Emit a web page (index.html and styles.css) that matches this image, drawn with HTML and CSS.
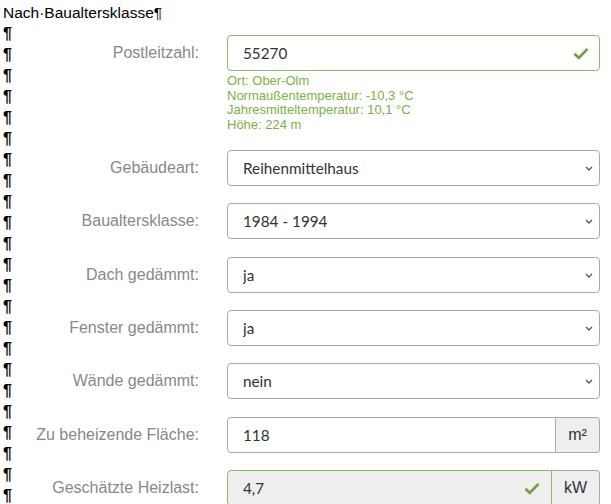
FILE: index.html
```html
<!DOCTYPE html>
<html lang="de">
<head>
<meta charset="utf-8">
<title>Nach Baualtersklasse</title>
<link rel="stylesheet" href="styles.css">
</head>
<body>
<div class="doc">
  <p class="title">Nach·Baualtersklasse¶</p>
  <div class="main">
    <div class="marks">¶<br>¶<br>¶<br>¶<br>¶<br>¶<br>¶<br>¶<br>¶<br>¶<br>¶<br>¶<br>¶<br>¶<br>¶<br>¶<br>¶<br>¶<br>¶<br>¶<br>¶<br>¶<br>¶</div>
    <form class="form">
      <div class="row">
        <label class="label" for="plz">Postleitzahl:</label>
        <div class="field valid">
          <input id="plz" class="control" value="55270">
          <svg class="check" width="16" height="13" viewBox="0 0 16 13"><path d="M1.5 6.8 L5.8 11 L14.5 1.8" fill="none" stroke="#6f9f3c" stroke-width="2.6"/></svg>
        </div>
        <div class="help">Ort: Ober-Olm<br>Normaußentemperatur: -10,3 °C<br>Jahresmitteltemperatur: 10,1 °C<br>Höhe: 224 m</div>
      </div>
      <div class="row">
        <label class="label" for="art">Gebäudeart:</label>
        <div class="field">
          <select id="art" class="control select"><option>Reihenmittelhaus</option></select>
          <svg class="chev" width="8" height="5" viewBox="0 0 8 5"><path d="M1 1 L4 4 L7 1" fill="none" stroke="#555" stroke-width="1.3"/></svg>
        </div>
      </div>
      <div class="row">
        <label class="label" for="bak">Baualtersklasse:</label>
        <div class="field">
          <select id="bak" class="control select"><option>1984 - 1994</option></select>
          <svg class="chev" width="8" height="5" viewBox="0 0 8 5"><path d="M1 1 L4 4 L7 1" fill="none" stroke="#555" stroke-width="1.3"/></svg>
        </div>
      </div>
      <div class="row">
        <label class="label" for="dach">Dach gedämmt:</label>
        <div class="field">
          <select id="dach" class="control select"><option>ja</option></select>
          <svg class="chev" width="8" height="5" viewBox="0 0 8 5"><path d="M1 1 L4 4 L7 1" fill="none" stroke="#555" stroke-width="1.3"/></svg>
        </div>
      </div>
      <div class="row">
        <label class="label" for="fen">Fenster gedämmt:</label>
        <div class="field">
          <select id="fen" class="control select"><option>ja</option></select>
          <svg class="chev" width="8" height="5" viewBox="0 0 8 5"><path d="M1 1 L4 4 L7 1" fill="none" stroke="#555" stroke-width="1.3"/></svg>
        </div>
      </div>
      <div class="row">
        <label class="label" for="wand">Wände gedämmt:</label>
        <div class="field">
          <select id="wand" class="control select"><option>nein</option></select>
          <svg class="chev" width="8" height="5" viewBox="0 0 8 5"><path d="M1 1 L4 4 L7 1" fill="none" stroke="#555" stroke-width="1.3"/></svg>
        </div>
      </div>
      <div class="row">
        <label class="label" for="fl">Zu beheizende Fläche:</label>
        <div class="group">
          <input id="fl" class="control gctl" value="118">
          <span class="addon addon-m2">m²</span>
        </div>
      </div>
      <div class="row">
        <label class="label" for="hl">Geschätzte Heizlast:</label>
        <div class="group">
          <div class="field gfield valid">
            <input id="hl" class="control gctl readonly" value="4,7" readonly>
            <svg class="check check-hl" width="16" height="13" viewBox="0 0 16 13"><path d="M1.5 6.8 L5.8 11 L14.5 1.8" fill="none" stroke="#6f9f3c" stroke-width="2.6"/></svg>
          </div>
          <span class="addon addon-kw">kW</span>
        </div>
      </div>
    </form>
  </div>
</div>
</body>
</html>
```

FILE: styles.css
```css
html, body {
  margin: 0;
  padding: 0;
  background: #fff;
  overflow: hidden;
}

.doc {
  padding: 2px 11px 0 3px;
  font-family: "Liberation Sans", Arial, sans-serif;
  color: #000;
}

.title {
  margin: 0;
  font-size: 15.5px;
  line-height: 21px;
}

.main {
  display: flex;
}

.marks {
  width: 20px;
  flex: none;
  font-size: 16px;
  line-height: 21px;
  font-weight: bold;
}

.form {
  flex: 1;
  display: flex;
  flex-direction: column;
  gap: 17.3px;
  padding-top: 12px;
  margin: 0;
}

.row {
  display: grid;
  grid-template-columns: 1fr 373px;
  column-gap: 28px;
  align-items: center;
}

.label {
  text-align: right;
  font-size: 16px;
  color: #888;
  white-space: nowrap;
}

.field {
  position: relative;
  display: flex;
}

.control {
  box-sizing: border-box;
  width: 100%;
  height: 36px;
  margin: 0;
  padding: 0 15px;
  border: 1px solid #a9a9a9;
  border-radius: 4px;
  background: #fff;
  font-family: Lato, "Open Sans", sans-serif;
  font-size: 15.3px;
  color: #333;
  outline: none;
}

.select {
  appearance: none;
  -webkit-appearance: none;
}

.valid .control {
  border-color: #91b864;
}

.check {
  position: absolute;
  right: 11px;
  top: 12px;
}

.check-hl {
  right: 12px;
}

.chev {
  position: absolute;
  right: 7px;
  top: 16px;
}

.help {
  grid-column: 2;
  margin-top: 3px;
  font-size: 13px;
  line-height: 14.7px;
  color: #7cb146;
}

.group {
  display: flex;
}

.gfield {
  flex: 1;
}

.gctl {
  border-radius: 4px 0 0 4px;
}

.group > .gctl {
  flex: 1;
}

.readonly {
  background: #eee;
}

.addon {
  box-sizing: border-box;
  height: 36px;
  display: flex;
  align-items: center;
  justify-content: center;
  border: 1px solid #a9a9a9;
  border-left: none;
  border-radius: 0 4px 4px 0;
  background: #eee;
  font-size: 16px;
  color: #333;
}

.addon-m2 {
  width: 44px;
}

.addon-kw {
  width: 48px;
}
```
